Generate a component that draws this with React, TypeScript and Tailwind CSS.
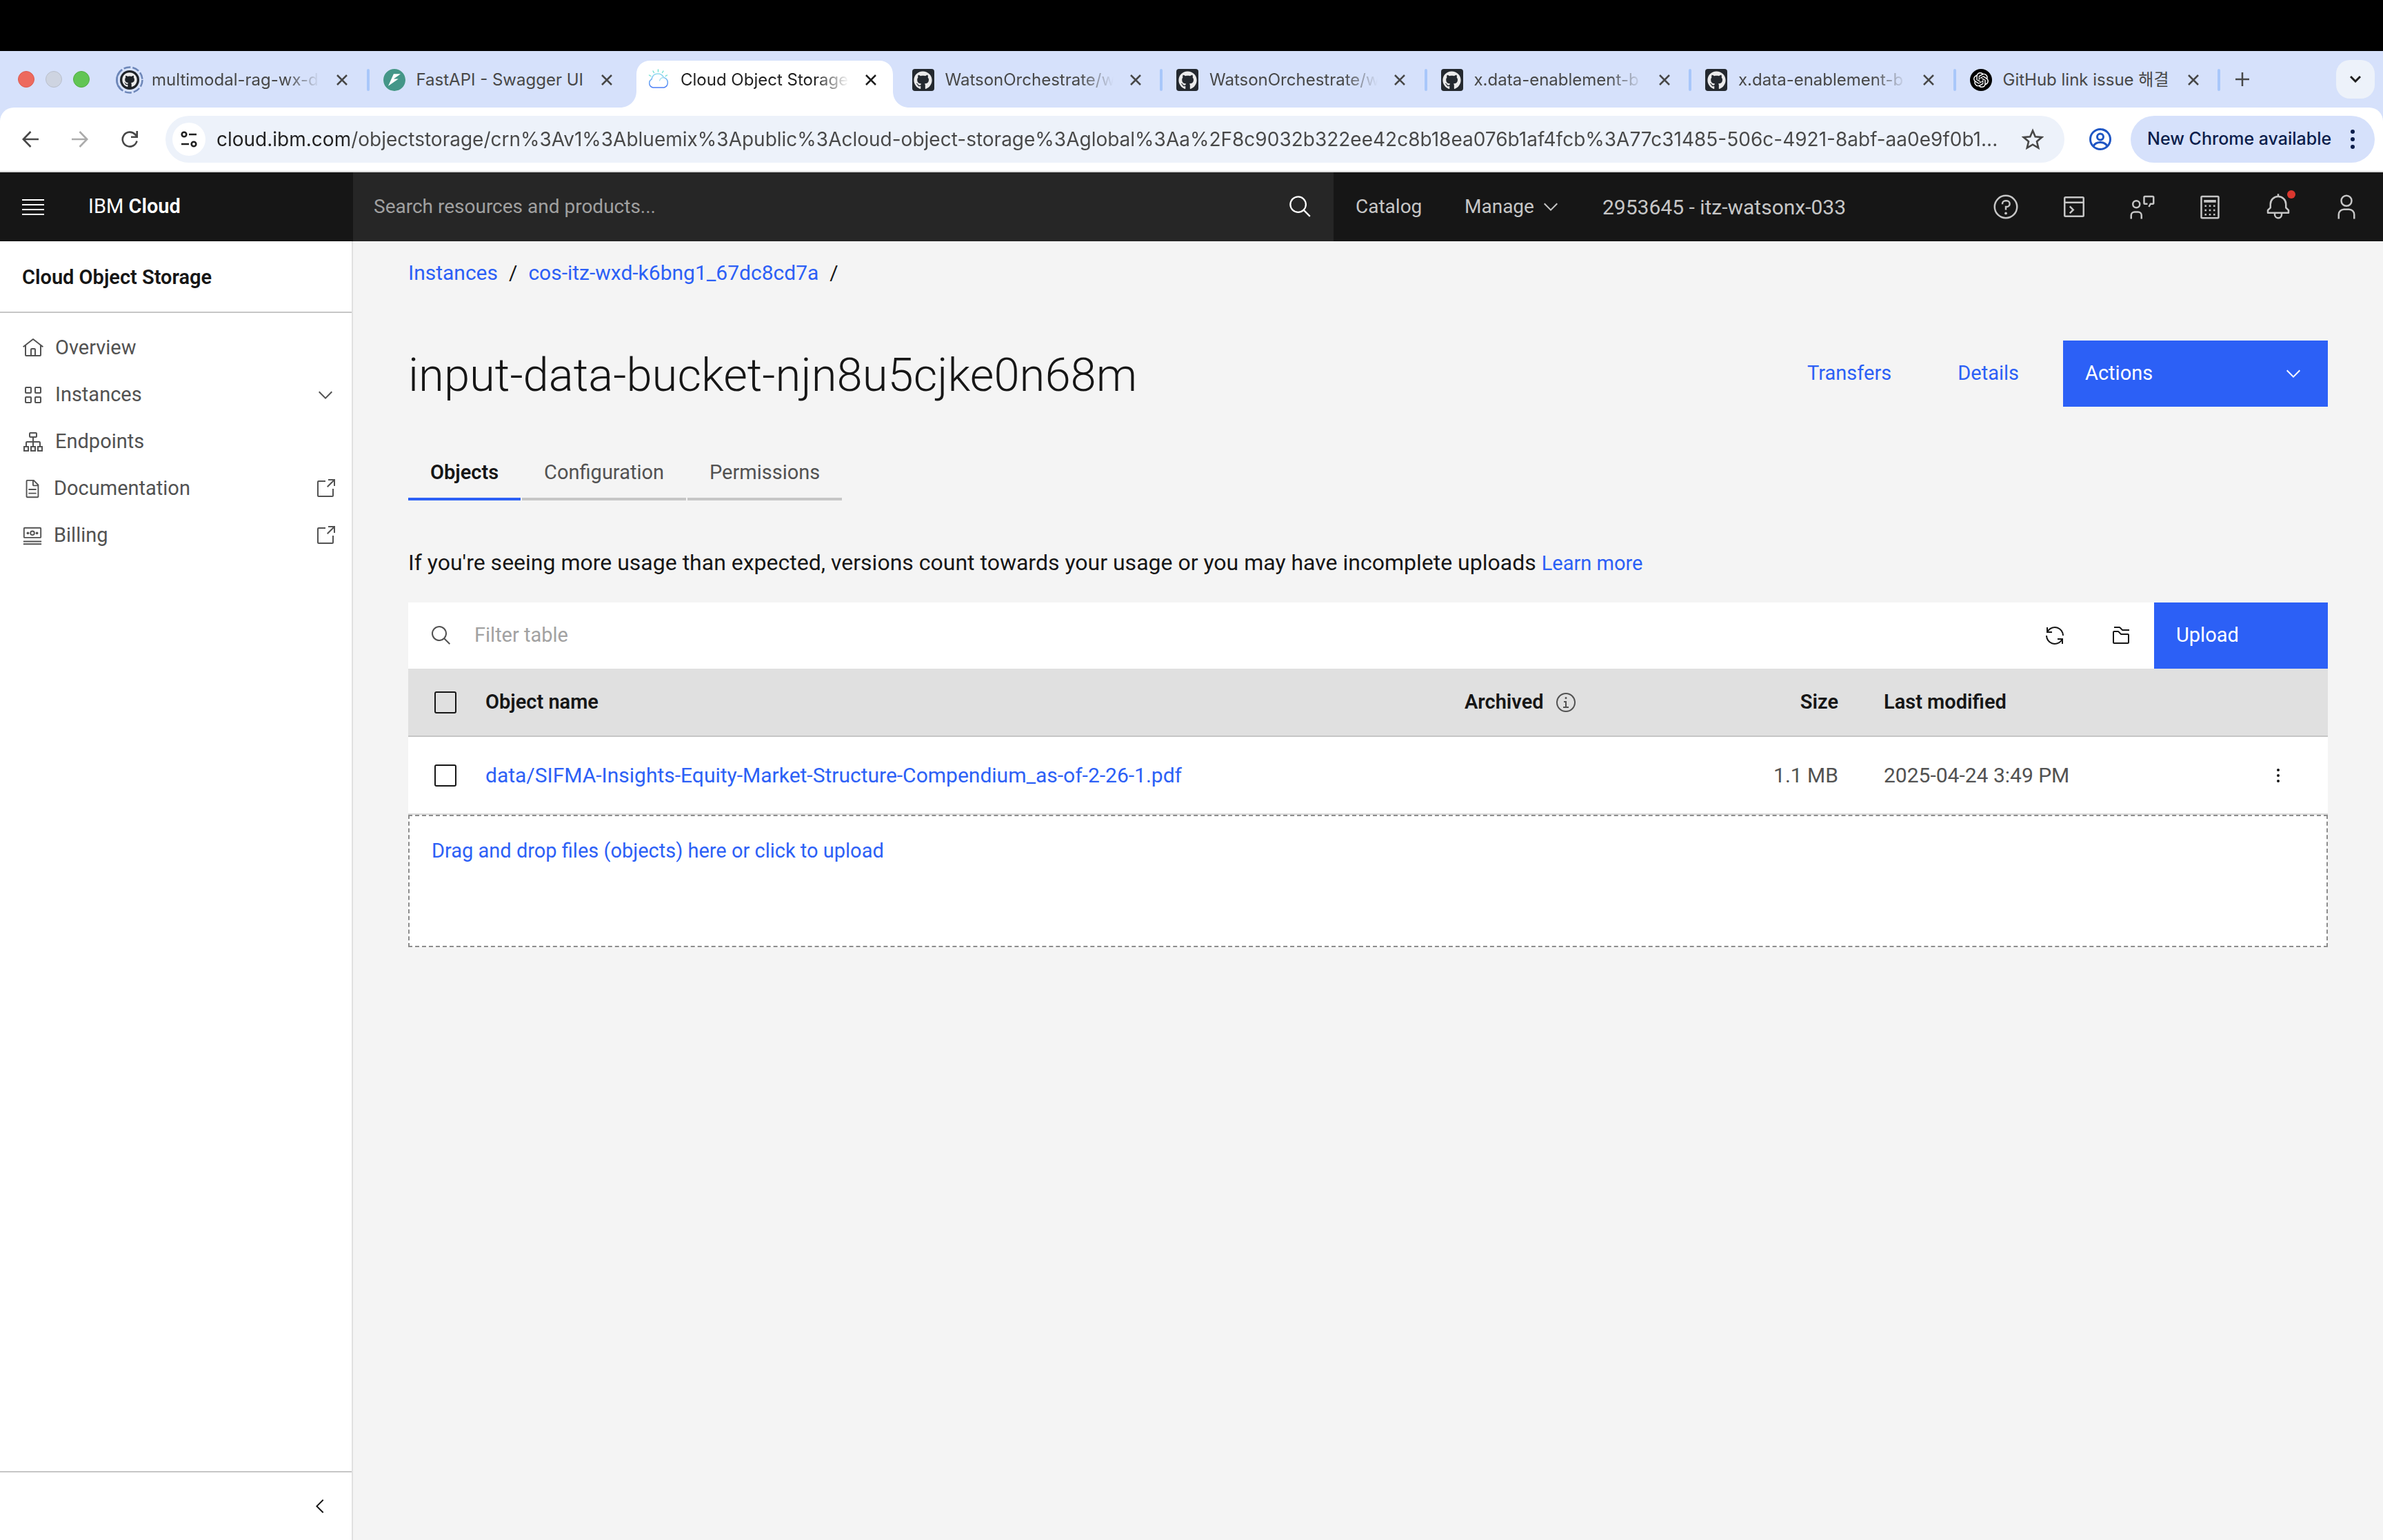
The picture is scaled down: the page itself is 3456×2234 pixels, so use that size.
import type { ReactNode } from "react";
import { FaGithub } from "react-icons/fa";
import { SiFastapi, SiOpenai } from "react-icons/si";

type IconProps = { className?: string; children: ReactNode };

function Icon({ className = "size-8", children }: IconProps) {
  return (
    <svg viewBox="0 0 32 32" fill="currentColor" aria-hidden="true" className={`shrink-0 ${className}`}>
      {children}
    </svg>
  );
}

function LineIcon({ className = "size-8", children }: IconProps) {
  return (
    <svg
      viewBox="0 0 32 32"
      fill="none"
      stroke="currentColor"
      strokeWidth="2"
      aria-hidden="true"
      className={`shrink-0 ${className}`}
    >
      {children}
    </svg>
  );
}

const ChevronDown = ({ className }: { className?: string }) => (
  <Icon className={className}>
    <path d="M16 22 6 12 7.4 10.6 16 19.2 24.6 10.6 26 12z" />
  </Icon>
);

const SearchIcon = ({ className }: { className?: string }) => (
  <Icon className={className}>
    <path d="M29,27.5859l-7.5521-7.5521a11.0177,11.0177,0,1,0-1.4141,1.4141L27.5859,29ZM4,13a9,9,0,1,1,9,9A9.01,9.01,0,0,1,4,13Z" />
  </Icon>
);

const LaunchIcon = () => (
  <Icon>
    <path d="M26,28H6a2,2,0,0,1-2-2V6A2,2,0,0,1,6,4H16V6H6V26H26V16h2V26A2,2,0,0,1,26,28Z" />
    <path d="M20 2v2h6.586L18 12.586 19.414 14 28 5.414V12h2V2z" />
  </Icon>
);

/* ---------- Browser chrome ---------- */

function CloudFavicon() {
  return (
    <svg viewBox="0 0 32 32" fill="none" strokeLinecap="round" aria-hidden="true" className="size-8 shrink-0">
      <defs>
        <linearGradient id="cloud" x1="0" y1="0" x2="0" y2="1">
          <stop offset="0" stopColor="#8fdcf0" />
          <stop offset="1" stopColor="#4a7df5" />
        </linearGradient>
      </defs>
      <path
        d="M8 27a6.500 6.500 0 0 1-2-12C7 9.500 11 7 15 7s7 2 8.500 5.500A7.500 7.500 0 0 1 24 27z"
        stroke="url(#cloud)"
        strokeWidth="1.5"
      />
      <path d="M17.500 17c1-3 3-4.500 6-4.500" stroke="#a8e0ee" strokeWidth="1.3" />
      <path d="M15.500 1v3M8 3l1.500 2.500M23 3l-1.500 2.500M2.500 9l2.500 1.500M28.500 9L26 10.500" stroke="#6fe0d0" strokeWidth="1.4" />
    </svg>
  );
}

const GithubFavicon = () => (
  <span className="flex size-8 shrink-0 items-center justify-center rounded bg-[#24292f]">
    <FaGithub className="size-[27px] text-[#ebebeb]" />
  </span>
);

const LoadingGithubFavicon = () => (
  <span className="relative flex size-8 shrink-0 items-center justify-center">
    <span className="flex size-7 items-center justify-center rounded-full bg-[#1f2328]">
      <FaGithub className="size-[22px] text-[#ebebeb]" />
    </span>
    <svg viewBox="0 0 40 40" fill="none" aria-hidden="true" className="absolute -inset-1 size-10">
      <circle cx="20" cy="20" r="18.500" stroke="#6c86b8" strokeWidth="2.500" strokeDasharray="10 3" />
      <path d="M9 5a18.500 18.500 0 0 0 0 30" stroke="#6c86b8" strokeWidth="2.500" />
    </svg>
  </span>
);

const FastApiFavicon = () => (
  <span className="flex size-8 shrink-0 rounded-full bg-white">
    <SiFastapi className="size-8 text-[#449688]" />
  </span>
);

const OpenAiFavicon = () => (
  <span className="flex size-8 shrink-0 items-center justify-center rounded-full bg-black">
    <SiOpenai className="size-[22px] text-white" />
  </span>
);

const browserTabs = [
  { title: "multimodal-rag-wx-d", icon: <LoadingGithubFavicon />, fade: true },
  { title: "FastAPI - Swagger UI", icon: <FastApiFavicon />, beforeActive: true },
  { title: "Cloud Object Storage", icon: <CloudFavicon />, active: true, fade: true },
  { title: "WatsonOrchestrate/w", icon: <GithubFavicon />, fade: true },
  { title: "WatsonOrchestrate/w", icon: <GithubFavicon />, fade: true },
  { title: "x.data-enablement-b", icon: <GithubFavicon />, fade: true },
  { title: "x.data-enablement-b", icon: <GithubFavicon />, fade: true },
  { title: "GitHub link issue 해결", icon: <OpenAiFavicon /> },
];

function BrowserTab({ tab }: { tab: (typeof browserTabs)[number] }) {
  return (
    <div className="relative flex h-full min-w-0 flex-1 items-end">
      {tab.active && (
        <svg
          viewBox="0 0 420 68"
          aria-hidden="true"
          className="absolute bottom-0 -left-[22px] h-[68px] w-[420px]"
          fill="#fff"
        >
          <path d="M0 68c14 0 24-10 24-24V20C24 8 32 0 44 0H376c12 0 20 8 20 20V44c0 14 10 24 24 24z" />
        </svg>
      )}
      <div className="relative flex h-20 w-full items-center pl-[18px] pr-0.5">
        {tab.icon}
        <span
          className={`ml-4 w-[244px] overflow-hidden whitespace-nowrap text-2xl ${
            tab.active ? "text-[#1f1f1f]" : "text-[#474747]"
          } ${tab.fade ? "mask-r-from-80% mask-r-to-100%" : ""}`}
        >
          {tab.title}
        </span>
        <button
          type="button"
          aria-label={`Close ${tab.title}`}
          className={`ml-5 flex size-6 items-center justify-center ${tab.active ? "text-[#1f1f1f]" : "text-[#474747]"}`}
        >
          <svg viewBox="0 0 16 16" stroke="currentColor" strokeWidth="2.500" aria-hidden="true" className="size-4">
            <path d="M1 1l14 14M15 1L1 15" />
          </svg>
        </button>
        {!tab.active && !tab.beforeActive && <span className="ml-auto h-8 w-1 rounded-full bg-[#a8c7fa]" />}
      </div>
    </div>
  );
}

function TabStrip() {
  return (
    <div className="flex h-[82px] items-stretch bg-[#d6e1fb]">
      <div className="flex w-[154px] shrink-0 items-center gap-4 pl-[26px]">
        <span className="size-6 rounded-full border border-[#dc5b51] bg-[#ed6a5e]" />
        <span className="size-6 rounded-full border border-[#b9bfcc] bg-[#ced4e1]" />
        <span className="size-6 rounded-full border border-[#52ad43] bg-[#61c554]" />
      </div>
      <div className="flex w-[3068px]">
        {browserTabs.map((tab, i) => (
          <BrowserTab key={i} tab={tab} />
        ))}
      </div>
      <button type="button" aria-label="New tab" className="flex w-14 items-center justify-center pl-1 text-[#474747]">
        <svg viewBox="0 0 20 20" stroke="currentColor" strokeWidth="2.500" aria-hidden="true" className="size-5">
          <path d="M10 0v20M0 10h20" />
        </svg>
      </button>
      <div className="ml-auto flex items-center pr-3 pb-px">
        <button
          type="button"
          aria-label="Search tabs"
          className="flex size-14 items-center justify-center rounded-[20px] bg-[#edf2fa] text-[#1f1f1f]"
        >
          <svg viewBox="0 0 16 10" fill="none" stroke="currentColor" strokeWidth="3" aria-hidden="true" className="h-2.5 w-4">
            <path d="M1 1l7 7 7-7" />
          </svg>
        </button>
      </div>
    </div>
  );
}

const url =
  "cloud.ibm.com/objectstorage/crn%3Av1%3Abluemix%3Apublic%3Acloud-object-storage%3Aglobal%3Aa%2F8c9032b322ee42c8b18ea076b1af4fcb%3A77c31485-506c-4921-8abf-aa0e9f0b1...";

function BrowserToolbar() {
  return (
    <div className="bg-[#d6e1fb]">
      <div className="flex h-[94px] items-center rounded-t-[20px] border-b-2 border-[#dcdcdc] bg-white pr-3 pl-2">
        <button type="button" aria-label="Back" className="flex w-[72px] justify-center text-[#474747]">
          <svg viewBox="0 0 24 24" fill="none" stroke="currentColor" strokeWidth="2.600" aria-hidden="true" className="size-6">
            <path d="M24 12H2M12.500 1L1.800 12l10.700 11" />
          </svg>
        </button>
        <button type="button" aria-label="Forward" className="flex w-[72px] justify-center text-[#ababab]">
          <svg viewBox="0 0 24 24" fill="none" stroke="currentColor" strokeWidth="2.600" aria-hidden="true" className="size-6">
            <path d="M0 12h22M11.500 1l10.700 11-10.700 11" />
          </svg>
        </button>
        <button type="button" aria-label="Reload" className="flex w-[72px] justify-center text-[#474747]">
          <svg viewBox="0 0 24 24" fill="none" stroke="currentColor" strokeWidth="2.600" aria-hidden="true" className="size-6">
            <path d="M22.500 14.500A10.500 10.500 0 1 1 20 5l3 3.200M22.700 0v8.700H14" />
          </svg>
        </button>
        <div className="ml-4 flex h-[68px] flex-1 items-center rounded-full bg-[#edf2fa] pr-[30px] pl-2.5">
          <button
            type="button"
            aria-label="View site information"
            className="flex size-12 shrink-0 items-center justify-center rounded-full bg-white text-[#1f1f1f]"
          >
            <svg viewBox="0 0 24 24" fill="none" stroke="currentColor" strokeWidth="2.600" aria-hidden="true" className="size-6">
              <circle cx="5" cy="5" r="3.300" />
              <path d="M12 5h11M1 19h11" />
              <circle cx="19" cy="19" r="3.300" />
            </svg>
          </button>
          <input
            aria-label="Address and search bar"
            defaultValue={url}
            className="ml-4 min-w-0 flex-1 bg-linear-to-r from-[#1f1f1f] from-[192px] to-[#474747] to-[192px] bg-clip-text text-[28px] leading-9 text-[#474747] outline-none [-webkit-text-fill-color:transparent]"
          />
          <button type="button" aria-label="Bookmark this tab" className="flex shrink-0 text-[#474747]">
            <svg viewBox="0 0 32 32" fill="none" stroke="currentColor" strokeWidth="2.600" aria-hidden="true" className="size-8">
              <path d="M16 3.500l3.700 8.800 9.500.8-7.200 6.200 2.200 9.300L16 23.700l-8.200 4.900L10 19.300l-7.200-6.200 9.500-.8z" />
            </svg>
          </button>
        </div>
        <button type="button" aria-label="Profile" className="flex w-24 justify-center pl-2 text-[#1f56c4]">
          <svg viewBox="0 0 32 32" fill="none" stroke="currentColor" strokeWidth="3" aria-hidden="true" className="size-8">
            <circle cx="16" cy="16" r="14.500" />
            <circle cx="16" cy="12.500" r="4.500" />
            <path d="M6 26c2-4 6-5.500 10-5.500S24 22 26 26" />
          </svg>
        </button>
        <button
          type="button"
          className="flex h-[68px] w-[354px] items-center justify-between rounded-full bg-[#d6e1fb] pr-[29px] pl-6 text-[25px] font-medium whitespace-nowrap text-[#0b1d4b]"
        >
          New Chrome available
          <span className="flex flex-col gap-[5px]">
            <span className="size-1.5 rounded-full bg-current" />
            <span className="size-1.5 rounded-full bg-current" />
            <span className="size-1.5 rounded-full bg-current" />
          </span>
        </button>
      </div>
    </div>
  );
}

/* ---------- IBM Cloud header ---------- */

const headerActions = [
  {
    label: "Help",
    icon: (
      <Icon className="size-10">
        <path d="M16,2A14,14,0,1,0,30,16,14,14,0,0,0,16,2Zm0,26A12,12,0,1,1,28,16,12,12,0,0,1,16,28Z" />
        <circle cx="16" cy="23.500" r="1.500" />
        <path d="M17,8H15.500A4.490,4.490,0,0,0,11,12.500V13h2v-.5A2.500,2.500,0,0,1,15.500,10H17a2.500,2.500,0,0,1,0,5H15v4.500h2V17a4.500,4.500,0,0,0,0-9Z" />
      </Icon>
    ),
  },
  {
    label: "IBM Cloud Shell",
    icon: (
      <LineIcon className="size-10">
        <rect x="5" y="5" width="22" height="22" rx="1" />
        <path d="M5 11h22M11 15.500l4 4-4 4" />
      </LineIcon>
    ),
  },
  {
    label: "Feedback",
    icon: (
      <LineIcon className="size-10">
        <circle cx="9" cy="13" r="4" />
        <path d="M3 30v-4a4 4 0 0 1 4-4h4a4 4 0 0 1 4 4v4" />
        <path d="M23.500 16l2-3.500H28a1 1 0 0 0 1-1V5a1 1 0 0 0-1-1h-9a1 1 0 0 0-1 1v6.500a1 1 0 0 0 1 1h3" />
      </LineIcon>
    ),
  },
  {
    label: "Cost estimator",
    icon: (
      <LineIcon className="size-10">
        <rect x="6" y="4" width="20" height="25" rx="1" />
        <path d="M10 9h12v1H10z" />
        <path d="M10 15h2M15 15h2M20 15h2M10 20h2M15 20h2M20 20h2M10 25h2M15 25h2M20 25h2" />
      </LineIcon>
    ),
  },
  {
    label: "Notifications",
    badge: true,
    icon: (
      <Icon className="size-10">
        <path d="M28.7071,19.293,26,16.5859V13a10.0136,10.0136,0,0,0-9-9.9492V1H15V3.0508A10.0136,10.0136,0,0,0,6,13v3.5859L3.2929,19.293A1,1,0,0,0,3,20v3a1,1,0,0,0,1,1h7v.7768a5.152,5.152,0,0,0,4.500,5.1987A5.0057,5.0057,0,0,0,21,25V24h7a1,1,0,0,0,1-1V20A1,1,0,0,0,28.7071,19.293ZM19,25a3,3,0,0,1-6,0V24h6Zm8-3H5V20.4141L7.707,17.707A1,1,0,0,0,8,17V13a8,8,0,0,1,16,0v4a1,1,0,0,0,.293.707L27,20.4141Z" />
      </Icon>
    ),
  },
  {
    label: "Profile",
    icon: (
      <Icon className="size-10">
        <path d="M16,4a5,5,0,1,1-5,5,5,5,0,0,1,5-5m0-2a7,7,0,1,0,7,7A7,7,0,0,0,16,2Z" />
        <path d="M26,30H24V25a5,5,0,0,0-5-5H13a5,5,0,0,0-5,5v5H6V25a7,7,0,0,1,7-7h6a7,7,0,0,1,7,7Z" />
      </Icon>
    ),
  },
];

function CloudHeader() {
  return (
    <header className="flex h-[100px] items-stretch bg-[#161616] text-[28px] text-[#c6c6c6]">
      <div className="flex w-[512px] shrink-0 items-center">
        <button type="button" aria-label="Open menu" className="ml-8 flex flex-col gap-[5px]">
          <span className="h-0.5 w-8 bg-white" />
          <span className="h-0.5 w-8 bg-white" />
          <span className="h-0.5 w-8 bg-white" />
          <span className="h-0.5 w-8 bg-white" />
        </button>
        <a href="#home" className="ml-16 text-[29px] text-white">
          IBM <b className="font-semibold">Cloud</b>
        </a>
      </div>
      <label className="flex flex-1 items-center bg-[#262626] pr-[30px] pl-[30px] text-white">
        <input
          type="search"
          aria-label="Search resources and products"
          placeholder="Search resources and products..."
          className="min-w-0 flex-1 bg-transparent outline-none placeholder:text-[#a0a0a0]"
        />
        <SearchIcon className="size-9" />
      </label>
      <nav className="flex w-[926px] shrink-0 items-center pl-8">
        <a href="#catalog" className="w-[158px]">
          Catalog
        </a>
        <button type="button" className="flex w-[200px] items-center gap-2">
          Manage
          <ChevronDown />
        </button>
        <button type="button" className="text-[30px] whitespace-nowrap">
          2953645 - itz-watsonx-033
        </button>
      </nav>
      <div className="flex w-[596px] shrink-0 items-center pr-1">
        {headerActions.map((a) => (
          <button key={a.label} type="button" aria-label={a.label} className="relative flex flex-1 items-center justify-center">
            {a.icon}
            {a.badge && <span className="absolute -top-1 right-6 size-3 rounded-full bg-[#da372f]" />}
          </button>
        ))}
      </div>
    </header>
  );
}

/* ---------- Side navigation ---------- */

const navItems = [
  {
    label: "Overview",
    icon: (
      <Icon>
        <path d="M16.6123,2.2138a1.010,1.010,0,0,0-1.2427,0L1,13.4194l1.2427,1.5717L4,13.6208V26a2,2,0,0,0,2,2H26a2,2,0,0,0,2-2V13.630L29.7573,15,31,13.4282ZM18,26H14V18h4Zm2,0V18a2,2,0,0,0-2-2H14a2,2,0,0,0-2,2v8H6V12.0615l10-7.790,10,7.8005V26Z" />
      </Icon>
    ),
  },
  {
    label: "Instances",
    trailing: <ChevronDown />,
    icon: (
      <LineIcon>
        <rect x="5" y="5" width="8" height="8" rx="1" />
        <rect x="19" y="5" width="8" height="8" rx="1" />
        <rect x="5" y="19" width="8" height="8" rx="1" />
        <rect x="19" y="19" width="8" height="8" rx="1" />
      </LineIcon>
    ),
  },
  {
    label: "Endpoints",
    icon: (
      <LineIcon>
        <rect x="11" y="3" width="10" height="6" rx="1" />
        <path d="M16 9v13M6 22v-5a1 1 0 0 1 1-1h18a1 1 0 0 1 1 1v5" />
        <path d="M3 23h6v6H3zM13 23h6v6h-6zM23 23h6v6h-6z" />
      </LineIcon>
    ),
  },
  {
    label: "Documentation",
    trailing: <LaunchIcon />,
    icon: (
      <Icon className="size-[30px]">
        <path d="M25.700,9.300l-7-7C18.500,2.100,18.300,2,18,2H8C6.900,2,6,2.900,6,4v24c0,1.100,0.900,2,2,2h16c1.100,0,2-0.900,2-2V10C26,9.700,25.900,9.500,25.700,9.300z M18,4.400l5.600,5.600H18V4.400z M24,28H8V4h8v6c0,1.100,0.900,2,2,2h6V28z" />
        <path d="M10 22h12v2H10zM10 16h12v2H10z" />
      </Icon>
    ),
  },
  {
    label: "Billing",
    trailing: <LaunchIcon />,
    icon: (
      <Icon className="size-[30px]">
        <path d="M2 24h28v2H2zM2 28h28v2H2z" />
        <circle cx="23" cy="12" r="2" />
        <circle cx="9" cy="12" r="2" />
        <path d="M16 16a4 4 0 1 1 4-4 4 4 0 0 1-4 4m0-6a2 2 0 1 0 2 2 2 2 0 0 0-2-2" />
        <path d="M28 20H4a2 2 0 0 1-2-2V5a2 2 0 0 1 2-2h24a2 2 0 0 1 2 2v13a2 2 0 0 1-2 2m0-15H4v13h24z" />
      </Icon>
    ),
  },
];

function SideNav() {
  return (
    <aside className="flex w-[512px] shrink-0 flex-col border-r-2 border-[#e0e0e0] bg-white text-[29px] text-[#525252]">
      <h2 className="flex h-[104px] items-center border-b-2 border-[#c6c6c6] pt-1 pl-8 font-semibold text-[#161616]">
        Cloud Object Storage
      </h2>
      <nav className="mt-[17px]">
        {navItems.map((item) => (
          <a key={item.label} href={`#${item.label.toLowerCase()}`} className="flex h-[68px] items-center gap-4 pr-[22px] pl-8">
            {item.icon}
            {item.label}
            <span className="ml-auto">{item.trailing}</span>
          </a>
        ))}
      </nav>
      <div className="mt-auto flex h-[100px] items-center justify-end border-t-2 border-[#c6c6c6] pr-[30px]">
        <button type="button" aria-label="Collapse navigation" className="text-[#161616]">
          <Icon>
            <path d="M10 16 20 6 21.400 7.400 12.800 16 21.400 24.600 20 26z" />
          </Icon>
        </button>
      </div>
    </aside>
  );
}

/* ---------- Bucket page ---------- */

const checkbox = "block size-8 shrink-0 appearance-none rounded-[3px] border-2 border-[#161616]";

const objects = [
  { name: "data/SIFMA-Insights-Equity-Market-Structure-Compendium_as-of-2-26-1.pdf", size: "1.1 MB", modified: "2025-04-24 3:49 PM" },
];

function ObjectsTable() {
  return (
    <section className="mt-9">
      <div className="flex h-24 items-stretch bg-white">
        <label className="flex flex-1 items-center pl-8 text-[#525252]">
          <SearchIcon />
          <input
            type="search"
            aria-label="Filter table"
            placeholder="Filter table"
            className="ml-8 min-w-0 flex-1 outline-none placeholder:text-[#a2a2a2]"
          />
        </label>
        <button type="button" aria-label="Refresh" className="flex w-24 items-center justify-center text-[#161616]">
          <Icon>
            <path d="M12 10H6.780A11 11 0 0 1 27 16h2A13 13 0 0 0 6 7.680V4H4v8h8ZM20 22h5.220A11 11 0 0 1 5 16H3a13 13 0 0 0 23 8.320V28h2v-8h-8Z" />
          </Icon>
        </button>
        <button type="button" aria-label="Folders" className="flex w-24 items-center justify-center text-[#161616]">
          <Icon>
            <path d="M26,28H6a2,2,0,0,1-2-2V11A2,2,0,0,1,6,9h5.670a2,2,0,0,1,1.420.590L16.500,13H26a2,2,0,0,1,2,2V26A2,2,0,0,1,26,28ZM11.670,11H6V26H26V15H15.670Z" />
            <path d="M28,9H17.670l-4-4H6V3h7.670a2,2,0,0,1,1.420.590L18.500,7H28Z" />
          </Icon>
        </button>
        <button type="button" className="w-[252px] bg-[#2c60f6] pl-8 text-left text-white">
          Upload
        </button>
      </div>
      <table className="w-full table-fixed border-collapse bg-white text-left text-[#525252]">
        <colgroup>
          <col className="w-24" />
          <col />
          <col className="w-[296px]" />
          <col className="w-[296px]" />
          <col className="w-[532px]" />
          <col className="w-36" />
        </colgroup>
        <thead>
          <tr className="h-[98px] border-b-2 border-[#c6c6c6] bg-[#e0e0e0] text-[#161616]">
            <th className="pl-[38px]">
              <input type="checkbox" aria-label="Select all objects" className={checkbox} />
            </th>
            <th className="pl-4 font-semibold">Object name</th>
            <th className="pl-4 font-semibold">
              <span className="flex items-center gap-4">
                Archived
                <button type="button" aria-label="About archived objects" className="text-[#525252]">
                  <Icon>
                    <path d="M17 22V14h-4v2h2v6h-3v2h8v-2zM16 8a1.500 1.500 0 1 0 1.500 1.500A1.500 1.500 0 0 0 16 8" />
                    <path d="M16,30A14,14,0,1,1,30,16,14,14,0,0,1,16,30ZM16,4A12,12,0,1,0,28,16,12,12,0,0,0,16,4Z" />
                  </Icon>
                </button>
              </span>
            </th>
            <th className="pr-[34px] text-right font-semibold">Size</th>
            <th className="pl-8 font-semibold">Last modified</th>
            <th aria-label="Row actions" />
          </tr>
        </thead>
        <tbody className="text-[30px]">
          {objects.map((o) => (
            <tr key={o.name} className="h-[113px] border-b-2 border-[#d8d8d8]">
              <td className="pl-[38px]">
                <input type="checkbox" aria-label={`Select ${o.name}`} className={checkbox} />
              </td>
              <td className="pl-4">
                <a href="#object" className="whitespace-nowrap text-[#2c60f6]">
                  {o.name}
                </a>
              </td>
              <td />
              <td className="pr-[34px] text-right">{o.size}</td>
              <td className="pl-8">{o.modified}</td>
              <td>
                <button type="button" aria-label="Object actions" className="mx-auto block text-[#161616]">
                  <Icon>
                    <circle cx="16" cy="8" r="2" />
                    <circle cx="16" cy="16" r="2" />
                    <circle cx="16" cy="24" r="2" />
                  </Icon>
                </button>
              </td>
            </tr>
          ))}
        </tbody>
      </table>
      <button
        type="button"
        className="block h-48 w-full border-2 border-dashed border-[#8d8d8d] bg-white px-8 pb-[86px] text-left text-[#2c60f6]"
      >
        Drag and drop files (objects) here or click to upload
      </button>
    </section>
  );
}

const idleTab = "h-20 border-b-4 border-[#c6c6c6] px-8 pt-1 text-[#525252]";

function BucketPage() {
  return (
    <main className="min-w-0 flex-1 bg-[#f4f4f4] px-20 pt-7 text-[29px] text-[#161616]">
      <nav aria-label="Breadcrumb" className="flex gap-4 text-[30px] leading-9">
        <a href="#instances" className="text-[#2c60f6]">
          Instances
        </a>
        <span>/</span>
        <a href="#instance" className="text-[#2c60f6]">
          cos-itz-wxd-k6bng1_67dc8cd7a
        </a>
        <span>/</span>
      </nav>
      <div className="mt-20 flex h-24 items-center">
        <h1 className="pt-1 text-[67px] leading-20 font-light">input-data-bucket-njn8u5cjke0n68m</h1>
        <button type="button" className="ml-auto px-8 text-[#2c60f6]">
          Transfers
        </button>
        <button type="button" className="mr-8 ml-8 px-8 text-[#2c60f6]">
          Details
        </button>
        <button type="button" className="flex h-24 w-[384px] items-center justify-between bg-[#2c60f6] pr-[34px] pl-8 text-white">
          Actions
          <ChevronDown />
        </button>
      </div>
      <div role="tablist" className="mt-14 flex gap-0.5">
        <button
          type="button"
          role="tab"
          aria-selected="true"
          className="h-20 border-b-4 border-[#2c60f6] px-8 pt-1 font-semibold"
        >
          Objects
        </button>
        <button type="button" role="tab" aria-selected="false" className={idleTab}>
          Configuration
        </button>
        <button type="button" role="tab" aria-selected="false" className={idleTab}>
          Permissions
        </button>
      </div>
      <p className="mt-[68px] text-[32px] leading-11">
        If you're seeing more usage than expected, versions count towards your usage or you may have incomplete uploads{" "}
        <a href="#learn" className="text-[29px] leading-none text-[#2c60f6]">
          Learn more
        </a>
      </p>
      <ObjectsTable />
    </main>
  );
}

export default function App() {
  return (
    <div className="flex min-h-screen flex-col bg-white font-['Roboto','Noto_Sans_CJK_KR',sans-serif]">
      <div className="font-['Inter','Noto_Sans_CJK_KR',sans-serif]">
        <div className="h-[74px] bg-black" />
        <TabStrip />
        <BrowserToolbar />
      </div>
      <CloudHeader />
      <div className="flex flex-1 items-stretch">
        <SideNav />
        <BucketPage />
      </div>
    </div>
  );
}
